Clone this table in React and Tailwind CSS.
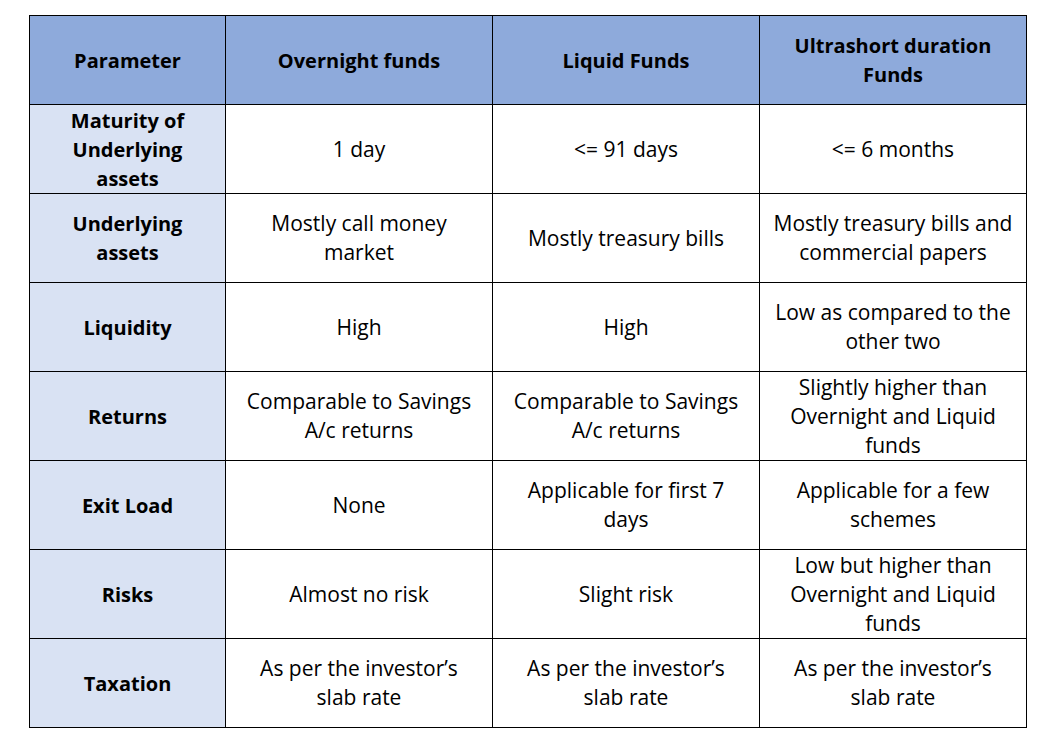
const header = ['Parameter', 'Overnight funds', 'Liquid Funds', ['Ultrashort duration', 'Funds']];

const rows = [
  [['Maturity of', 'Underlying', 'assets'], ['1 day'], ['<= 91 days'], ['<= 6 months']],
  [['Underlying', 'assets'], ['Mostly call money', 'market'], ['Mostly treasury bills'], ['Mostly treasury bills and', 'commercial papers']],
  [['Liquidity'], ['High'], ['High'], ['Low as compared to the', 'other two']],
  [['Returns'], ['Comparable to Savings', 'A/c returns'], ['Comparable to Savings', 'A/c returns'], ['Slightly higher than', 'Overnight and Liquid', 'funds']],
  [['Exit Load'], ['None'], ['Applicable for first 7', 'days'], ['Applicable for a few', 'schemes']],
  [['Risks'], ['Almost no risk'], ['Slight risk'], ['Low but higher than', 'Overnight and Liquid', 'funds']],
  [['Taxation'], ['As per the investor\u2019s', 'slab rate'], ['As per the investor\u2019s', 'slab rate'], ['As per the investor\u2019s', 'slab rate']],
];

function Lines({ lines }) {
  const list = Array.isArray(lines) ? lines : [lines];
  return list.map((l, i) => <div key={i} className="whitespace-nowrap">{l}</div>);
}

export default function App() {
  return (
    <div className="bg-white w-[1050px] h-[748px] pt-[15px] pl-[29px] text-black leading-[29px] font-['Open_Sans',sans-serif]">
      <table className="border-collapse table-fixed w-[997px]">
        <colgroup>
          <col className="w-[196px]" />
          <col className="w-[267px]" />
          <col className="w-[267px]" />
          <col className="w-[267px]" />
        </colgroup>
        <thead>
          <tr className="h-[89px] bg-[#8eaadb]">
            {header.map((h, i) => (
              <th key={i} className="border border-black text-center align-middle font-bold text-[20px] p-0">
                <Lines lines={h} />
              </th>
            ))}
          </tr>
        </thead>
        <tbody>
          {rows.map((r, ri) => (
            <tr key={ri} className="h-[89px]">
              {r.map((c, ci) => (
                <td
                  key={ci}
                  className={`border border-black text-center align-middle p-0 ${ci === 0 ? 'bg-[#d9e2f3] font-bold text-[20px]' : 'bg-white text-[21px]'}`}
                >
                  <Lines lines={c} />
                </td>
              ))}
            </tr>
          ))}
        </tbody>
      </table>
    </div>
  );
}
